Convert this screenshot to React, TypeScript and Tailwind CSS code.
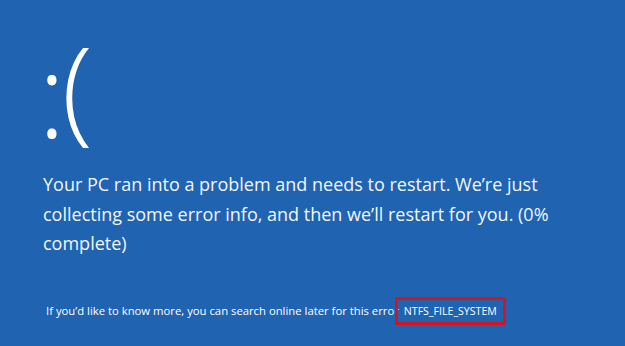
export default function App() {
  return (
    <div
      className="w-[625px] h-[346px] bg-[#1f63b1] text-white overflow-hidden"
      style={{ fontFamily: '"Open Sans", "Noto Sans", sans-serif' }}
    >
      <div className="h-[170px] pl-[38px] flex items-start">
        <div className="mt-[18px] flex items-start font-light">
          <span className="text-[116px] leading-[150px]">:</span>
          <span className="ml-[-4px] mt-[-7px] text-[114px] leading-[150px]">(</span>
        </div>
      </div>
      <div className="pl-[43px] w-[560px] text-[18px] leading-[29.5px] text-[#f2f6fc]">
        Your PC ran into a problem and needs to restart. We’re just collecting some error info, and then we’ll restart for you. (0% complete)
      </div>
      <div className="pl-[46px] mt-[38px] flex items-center text-[11.3px] leading-[16px]">
        <span>If you’d like to know more, you can search online later for this error</span>
        <span className="ml-[-4px] border-[3px] border-[#d4141f] px-[6px] py-[4px] rounded-[2px] text-[10.6px] leading-[14px]">NTFS_FILE_SYSTEM</span>
      </div>
    </div>
  );
}
